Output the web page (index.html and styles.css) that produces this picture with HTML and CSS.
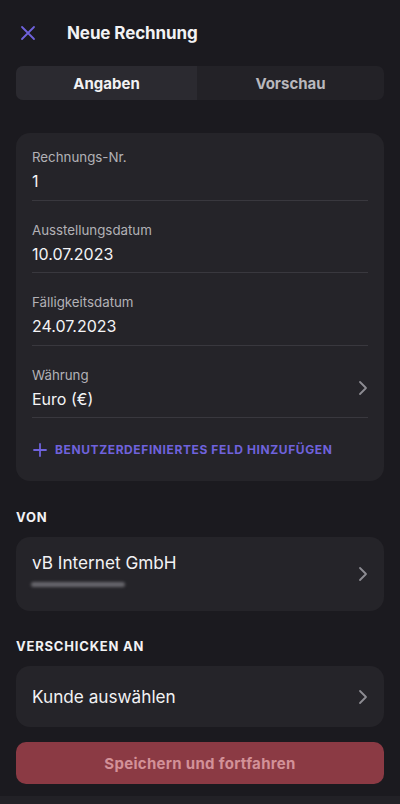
FILE: index.html
```html
<!DOCTYPE html>
<html lang="de">
  <head>
    <meta charset="UTF-8" />
    <meta name="viewport" content="width=device-width, initial-scale=1.0" />
    <title>Neue Rechnung</title>
    <link rel="stylesheet" href="styles.css">
  </head>
  <body>
    <div class="screen">
      <header class="topbar">
        <button class="btn-close" aria-label="Schließen">
          <svg width="16" height="16" viewBox="0 0 16 16">
            <path d="M2 2 L14 14 M14 2 L2 14" stroke="#6f62dc" stroke-width="1.8" stroke-linecap="round" fill="none" />
          </svg>
        </button>
        <h1 class="title">Neue Rechnung</h1>
      </header>

      <div class="tabs">
        <div class="tab active">Angaben</div>
        <div class="tab">Vorschau</div>
      </div>

      <section class="card fields">
        <div class="field">
          <div class="field-label">Rechnungs-Nr.</div>
          <div class="field-value">1</div>
        </div>
        <div class="field">
          <div class="field-label">Ausstellungsdatum</div>
          <div class="field-value">10.07.2023</div>
        </div>
        <div class="field">
          <div class="field-label">Fälligkeitsdatum</div>
          <div class="field-value">24.07.2023</div>
        </div>
        <div class="field field-select">
          <div>
            <div class="field-label">Währung</div>
            <div class="field-value">Euro (€)</div>
          </div>
          <svg class="chevron" width="10" height="16" viewBox="0 0 10 16">
            <path d="M2 2 L8 8 L2 14" stroke="#8d8c92" stroke-width="1.8" fill="none" stroke-linecap="round" stroke-linejoin="round" />
          </svg>
        </div>
        <div class="add-field">
          <svg width="14" height="14" viewBox="0 0 14 14">
            <path d="M7 1 V13 M1 7 H13" stroke="#6f62dc" stroke-width="1.8" stroke-linecap="round" />
          </svg>
          <span>Benutzerdefiniertes Feld hinzufügen</span>
        </div>
      </section>

      <h2 class="section-title">Von</h2>
      <section class="card row-card from">
        <div>
          <div class="row-main">vB Internet GmbH</div>
          <div class="blurred"></div>
        </div>
        <svg class="chevron" width="10" height="16" viewBox="0 0 10 16">
          <path d="M2 2 L8 8 L2 14" stroke="#8d8c92" stroke-width="1.8" fill="none" stroke-linecap="round" stroke-linejoin="round" />
        </svg>
      </section>

      <h2 class="section-title">Verschicken an</h2>
      <section class="card row-card to">
        <div class="row-main">Kunde auswählen</div>
        <svg class="chevron" width="10" height="16" viewBox="0 0 10 16">
          <path d="M2 2 L8 8 L2 14" stroke="#8d8c92" stroke-width="1.8" fill="none" stroke-linecap="round" stroke-linejoin="round" />
        </svg>
      </section>

      <button class="btn-save">Speichern und fortfahren</button>
    </div>
    <div class="bottom-strip"></div>
  </body>
</html>
```

FILE: styles.css
```css
* {
  box-sizing: border-box;
}
html,
body {
  margin: 0;
  height: 100%;
}
body {
  background-color: #1b1a1f;
  font-family: "Inter", "Noto Sans", sans-serif;
  color: #f2f2f4;
  display: flex;
  flex-direction: column;
}
.screen {
  flex: 1;
  padding: 0 16px;
}
.topbar {
  display: flex;
  align-items: center;
  height: 66px;
}
.btn-close {
  background: none;
  border: 0;
  padding: 0;
  margin-left: 4px;
  width: 16px;
  height: 16px;
  display: flex;
  cursor: pointer;
}
.title {
  margin: 0 0 0 31px;
  font-size: 17px;
  font-weight: 700;
  letter-spacing: -0.1px;
}
.tabs {
  display: flex;
  height: 34px;
  background-color: #232227;
  border-radius: 7px;
}
.tab {
  flex: 1;
  display: flex;
  justify-content: center;
  align-items: center;
  font-size: 15px;
  font-weight: 700;
  color: #b9b8bd;
}
.tab.active {
  flex: 0 0 181px;
  background-color: #2b2a30;
  border-radius: 7px 0 0 7px;
  color: #f2f2f4;
}
.card {
  background-color: #252429;
  border-radius: 14px;
}
.fields {
  margin-top: 33px;
  padding: 0 16px;
}
.field {
  padding: 19px 0 6.5px;
  border-bottom: 1px solid #39383e;
}
.field:first-child {
  padding-top: 14px;
}
.field-label {
  font-size: 13.3px;
  color: #b2b1b6;
  line-height: 20px;
}
.field-value {
  font-size: 16px;
  line-height: 24px;
  margin-top: 2px;
  color: #f4f4f6;
}
.field-select {
  display: flex;
  justify-content: space-between;
  align-items: center;
}
.field-select > div {
  align-self: flex-start;
}
.chevron {
  flex-shrink: 0;
}
.add-field {
  display: flex;
  align-items: center;
  gap: 8px;
  height: 63px;
  padding-left: 1px;
  color: #6f62dc;
  font-size: 12px;
  font-weight: 700;
  letter-spacing: 0.6px;
  text-transform: uppercase;
}
.section-title {
  margin: 28px 0 12px;
  font-size: 13px;
  font-weight: 700;
  letter-spacing: 0.8px;
  text-transform: uppercase;
  color: #f2f2f4;
  line-height: 16px;
}
.from + .section-title {
  margin-top: 27px;
}
.row-card {
  display: flex;
  justify-content: space-between;
  align-items: center;
  padding: 0 16px;
}
.from {
  height: 74px;
}
.from > div {
  align-self: flex-start;
  padding-top: 14px;
}
.to {
  height: 61px;
}
.row-main {
  font-size: 17.2px;
  line-height: 24px;
}
.blurred {
  margin-top: 7px;
  margin-left: -1px;
  width: 94px;
  height: 5px;
  border-radius: 3px;
  background-color: #67666c;
  filter: blur(1.5px);
}
.btn-save {
  display: block;
  width: 100%;
  margin-top: 15px;
  height: 42px;
  border: 0;
  border-radius: 10px;
  background-color: #8b3a44;
  color: #d39198;
  font-family: "Inter", "Noto Sans", sans-serif;
  font-size: 15px;
  font-weight: 700;
  letter-spacing: 0.3px;
}
.bottom-strip {
  height: 8px;
  background-color: #222126;
}
```
